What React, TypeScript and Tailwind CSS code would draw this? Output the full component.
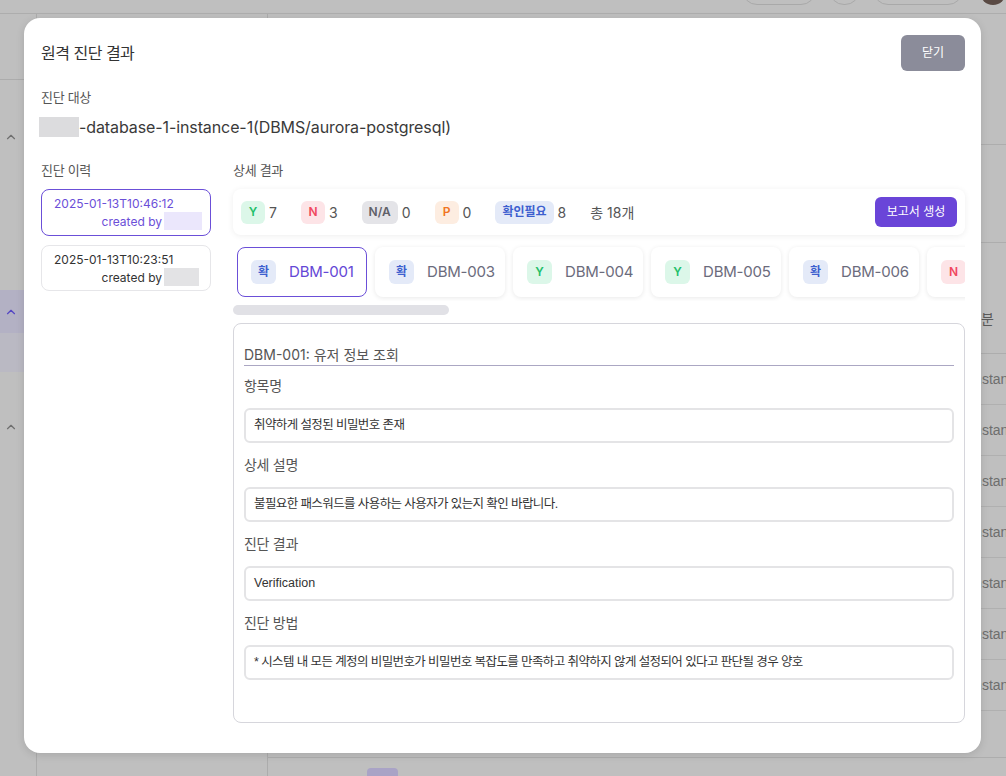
import React from "react";
import { ChevronUp } from "lucide-react";

const FONT = { fontFamily: 'Inter, "Noto Sans CJK KR", sans-serif' };
const SYS = { fontFamily: '"Liberation Sans", "Noto Sans CJK KR", sans-serif' };

type Kind = "Y" | "N" | "NA" | "P" | "C";

const badgeCls: Record<Kind, string> = {
  Y: "bg-[#dcf7e9] text-[#1fbf6a]",
  N: "bg-[#fde4e7] text-[#f0475e]",
  NA: "bg-[#e4e4e8] text-[#5f6068]",
  P: "bg-[#fdede1] text-[#f07422]",
  C: "bg-[#e4eaf8] text-[#3d5fcf]",
};

function Badge({ kind, label }: { kind: Kind; label: string }) {
  return (
    <span
      className={`flex h-[23px] min-w-[24px] items-center justify-center rounded-md px-[7px] text-[12px] font-semibold ${badgeCls[kind]}`}
    >
      {label}
    </span>
  );
}

const tabs: { kind: Kind; label: string; id: string }[] = [
  { kind: "C", label: "확", id: "DBM-001" },
  { kind: "C", label: "확", id: "DBM-003" },
  { kind: "Y", label: "Y", id: "DBM-004" },
  { kind: "Y", label: "Y", id: "DBM-005" },
  { kind: "C", label: "확", id: "DBM-006" },
  { kind: "N", label: "N", id: "DBM-007" },
];

const fields = [
  { label: "항목명", value: "취약하게 설정된 비밀번호 존재", ko: true },
  { label: "상세 설명", value: "불필요한 패스워드를 사용하는 사용자가 있는지 확인 바랍니다.", ko: true },
  { label: "진단 결과", value: "Verification", ko: false },
  {
    label: "진단 방법",
    value: "* 시스템 내 모든 계정의 비밀번호가 비밀번호 복잡도를 만족하고 취약하지 않게 설정되어 있다고 판단될 경우 양호",
    ko: true,
  },
];

function Background() {
  return (
    <div className="flex h-full w-full flex-col bg-[#bfbfbf]" style={SYS}>
      {/* header */}
      <div className="flex h-[14px] flex-none items-start justify-end overflow-hidden border-b border-[#adadad]">
        <div className="mt-[-25px] flex items-start gap-[13px]">
          <div className="h-[30px] w-[74px] rounded-full border border-[#a9a9a9]" />
          <div className="h-[30px] w-[31px] rounded-full border border-[#a9a9a9]" />
          <div className="h-[30px] w-[90px] rounded-full border border-[#a9a9a9]" />
          <div className="ml-[4px] h-[30px] w-[26px] rounded-full bg-[#5a4a44]" />
        </div>
      </div>
      <div className="flex flex-1">
        {/* sidebar */}
        <div className="flex w-[37px] flex-none flex-col border-r border-[#acacac]">
          <div className="h-[66px] border-b border-[#acacac]" />
          <div className="flex h-[64px] items-end justify-start pl-[4px] text-[#6f6f6f]">
            <ChevronUp size={14} strokeWidth={2} />
          </div>
          <div className="h-[146px]" />
          <div className="flex h-[43px] items-center bg-[#b3b1c4] pl-[4px] text-[#5446c4]">
            <ChevronUp size={14} strokeWidth={2} />
          </div>
          <div className="h-[39px] bg-[#bab9c3]" />
          <div className="flex h-[62px] items-end pl-[4px] text-[#6f6f6f]">
            <ChevronUp size={14} strokeWidth={2} />
          </div>
        </div>
        {/* second pane */}
        <div className="w-[231px] flex-none border-r border-[#acacac]" />
        {/* main */}
        <div className="flex flex-1 flex-col">
          <div className="h-[131px] border-b border-[#adadad]" />
          <div className="h-[98px] border-b border-[#adadad]" />
          <div className="flex h-[111px] border-b border-[#adadad] pt-[66px] text-[14px] text-[#5a5a5a]">
            <div className="w-[700px] flex-none" />
            <span>구분</span>
          </div>
          {Array.from({ length: 7 }).map((_, i) => (
            <div key={i} className="flex h-[51px] flex-none items-center border-b border-[#b0b0b0] text-[14px] text-[#6e6e6e]">
              <div className="w-[703px] flex-none" />
              <span>instance</span>
            </div>
          ))}
          <div className="h-[47px] border-b border-[#adadad]" />
          <div className="flex pl-[99px] pt-[10px]">
            <div className="h-[20px] w-[31px] rounded-[4px] bg-[#a9a3c6]" />
          </div>
        </div>
      </div>
    </div>
  );
}

export default function App() {
  return (
    <div className="relative h-[776px] w-[1006px] overflow-hidden" style={FONT}>
      <Background />
      <div
        className="absolute left-[24px] top-[18px] flex h-[735px] w-[957px] flex-col rounded-2xl bg-white pl-[17px] pr-[16px] pt-[17px] shadow-[0_2px_8px_rgba(0,0,0,0.12)]"
        style={FONT}
      >
        {/* header */}
        <div className="flex h-[36px] items-center justify-between">
          <h2 className="text-[16px] tracking-[-0.5px] text-[#333]">원격 진단 결과</h2>
          <button className="h-[36px] w-[64px] rounded-md bg-[#8b8c9a] text-[12px] text-white">닫기</button>
        </div>

        <div className="mt-[16px] text-[13px] leading-[20px] tracking-[-0.3px] text-[#555]">진단 대상</div>
        <div className="mt-[8px] flex h-[24px] items-center">
          <span className="ml-[-2px] h-[20px] w-[40px] bg-[#dcdcde]" />
          <span className="text-[16px] tracking-[-0.1px] text-[#3a3a3a]">-database-1-instance-1(DBMS/aurora-postgresql)</span>
        </div>

        <div className="mt-[21px] flex gap-[22px]">
          {/* history */}
          <div className="w-[170px] flex-none">
            <div className="text-[13px] leading-[20px] tracking-[-0.3px] text-[#555]">진단 이력</div>
            <div className="mt-[9px] flex flex-col gap-[9px]">
              <div className="h-[47px] rounded-lg border border-[#6b4fd8] pl-[12px] pr-[8px] pt-[5px] text-[12px] leading-[17px] text-[#6b4fd8]">
                <div>2025-01-13T10:46:12</div>
                <div className="flex items-center justify-end">
                  <span>created by</span>
                  <span className="ml-[2px] h-[18px] w-[38px] bg-[#ebe7fc]" />
                </div>
              </div>
              <div className="h-[46px] rounded-lg border border-[#e6e6e9] pl-[12px] pr-[11px] pt-[5px] text-[12px] leading-[17px] text-[#333]">
                <div>2025-01-13T10:23:51</div>
                <div className="flex items-center justify-end">
                  <span>created by</span>
                  <span className="ml-[2px] h-[18px] w-[35px] bg-[#e3e3e5]" />
                </div>
              </div>
            </div>
          </div>

          {/* detail */}
          <div className="min-w-0 flex-1">
            <div className="text-[13px] leading-[20px] tracking-[-0.3px] text-[#555]">상세 결과</div>
            <div className="mt-[9px] flex h-[46px] items-center justify-between rounded-lg bg-white px-2 shadow-[0_1px_6px_rgba(0,0,0,0.07)]">
              <div className="flex items-center gap-6 text-[14px] text-[#555]">
                <div className="flex items-center gap-[4px]"><Badge kind="Y" label="Y" /><span>7</span></div>
                <div className="flex items-center gap-[4px]"><Badge kind="N" label="N" /><span>3</span></div>
                <div className="flex items-center gap-[4px]"><Badge kind="NA" label="N/A" /><span>0</span></div>
                <div className="flex items-center gap-[4px]"><Badge kind="P" label="P" /><span>0</span></div>
                <div className="flex items-center gap-[4px]"><Badge kind="C" label="확인필요" /><span>8</span></div>
                <span>총 18개</span>
              </div>
              <button className="h-[30px] w-[82px] rounded-md bg-[#6a45d8] text-[12px] text-white">보고서 생성</button>
            </div>

            <div className="mt-[8px] flex gap-2 overflow-hidden p-1">
              {tabs.map((t, i) => (
                <div
                  key={t.id}
                  className={
                    i === 0
                      ? "flex h-[50px] w-[130px] flex-none items-center gap-[13px] rounded-lg border border-[#6b4fd8] bg-white pl-[13px] text-[15px] tracking-[-0.2px] text-[#6447d6]"
                      : "flex h-[50px] w-[130px] flex-none items-center gap-[13px] rounded-lg bg-white pl-[14px] text-[15px] tracking-[-0.2px] text-[#6b6b7c] shadow-[0_1px_5px_rgba(0,0,0,0.09)]"
                  }
                >
                  <span className={`flex h-[24px] w-[25px] items-center justify-center rounded-md text-[12px] font-semibold ${badgeCls[t.kind]}`}>
                    {t.label}
                  </span>
                  <span>{t.id}</span>
                </div>
              ))}
            </div>
            <div className="mt-[4px] h-[10px] w-[216px] rounded-full bg-[#e1e1e6]" />

            <div className="mt-[8px] h-[400px] rounded-lg border border-[#d6d6dc] px-[10px] pt-[21px]">
              <div className="border-b border-[#aba7c3] text-[14px] leading-[20px] text-[#555]">DBM-001: 유저 정보 조회</div>
              {fields.map((f, i) => (
                <div key={f.label}>
                  <div className={`${i === 0 ? "mt-[10px]" : "mt-[12px]"} text-[14px] leading-[20px] tracking-[-0.3px] text-[#555]`}>
                    {f.label}
                  </div>
                  <div
                    className={`mt-[12px] flex h-[35px] items-center rounded-md border-2 border-[#e4e4e6] px-[8px] text-[12.5px] text-[#333] ${f.ko ? "tracking-[-0.6px]" : ""}`}
                    style={SYS}
                  >
                    {f.value}
                  </div>
                </div>
              ))}
            </div>
          </div>
        </div>
      </div>
    </div>
  );
}
